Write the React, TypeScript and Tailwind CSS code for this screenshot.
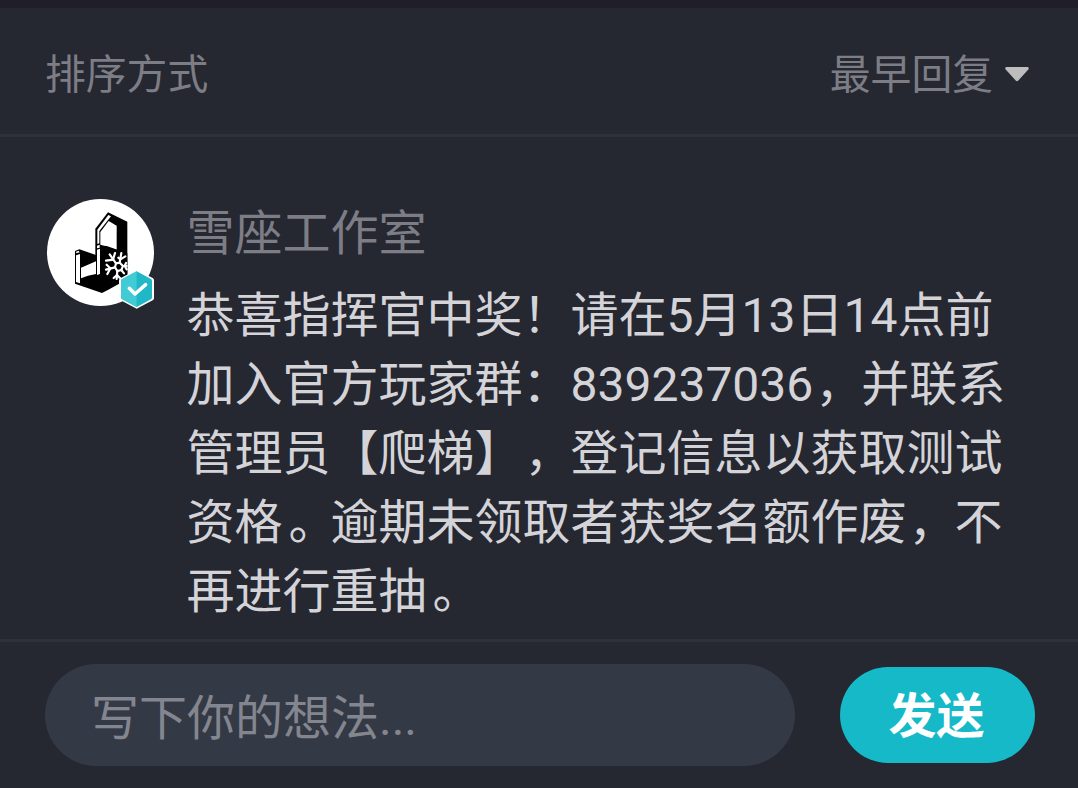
const commentLines = [
  "恭喜指挥官中奖！请在5月13日14点前",
  "加入官方玩家群：839237036，并联系",
  "管理员【爬梯】，登记信息以获取测试",
  "资格。逾期未领取者获奖名额作废，不",
  "再进行重抽。",
];

// full stops and commas sit a little further into their cell than the font's default
const renderLine = (line: string) =>
  line.split(/([。，])/).map((part, index) => {
    if (part === "。") {
      return (
        <span key={index} className="mr-[-6px] ml-[6px]">
          {part}
        </span>
      );
    }
    if (part === "，") {
      return (
        <span key={index} className="mr-[-2px] ml-[2px]">
          {part}
        </span>
      );
    }
    return part;
  });

const Avatar = () => (
  <svg
    viewBox="21 27 321 321"
    className="size-[107px] shrink-0 overflow-visible"
    role="img"
  >
    <circle cx="181.5" cy="187.5" r="160.5" fill="#fff" />
    {/* throne back */}
    <path d="M166 116L204 67L262 95V268L232 282L166 262Z" fill="#000" />
    <path d="M172 119L205 75L213 79L178 123V160L172 162Z" fill="#fff" />
    <path d="M181 126L206 93L230 107V180L181 164Z" fill="#fff" />
    {/* seat and arm rests */}
    <path d="M105 183L118 178L170 196V166L200 168L262 190V268L205 299L186 309L105 281Z" fill="#000" />
    <path d="M108 196L120 192V280L108 276Z" fill="#fff" />
    <path d="M108 185L116 182L119 187L109 190Z" fill="#fff" />
    <path d="M123 233L168 214V252L144 257L123 265Z" fill="#fff" />
    <path d="M171 179L180 176V252L171 255Z" fill="#fff" />
    <path d="M171 167L179 164V173L171 175Z" fill="#fff" />
    {/* snowflake */}
    <g fill="none" stroke="#fff" strokeWidth="6.5" strokeLinecap="round">
      <path d="M228 220L239 218L249 228L244 240L232 243L225 232Z" />
      <path d="M228 220L209 193M239 218L244 189M249 228H260M225 232L198 239M232 243L230 267M244 240L252 250" />
      <path d="M198 212L219 209L225 189M235 203L241 208L256 199M200 224L211 235L202 252M221 264L231 255L240 264M258 219L254 228L260 238" />
    </g>
    {/* verified badge */}
    <path d="M290 239L338 264Q342 266 342 271V325Q342 329 338 331L290 356L242 331Q237 328 237 323V272Q237 267 241 265Z" fill="#fff" />
    <path d="M290 244L333 267Q336 269 336 273V322Q336 326 333 328L290 351L247 328Q243 326 243 322V273Q243 269 247 267Z" fill="#20b7c7" />
    <path d="M290 244L247 267Q243 269 243 273V322Q243 326 247 328L290 351Z" fill="#40cbd5" />
    <path d="M268 295L285 312L317 284" fill="none" stroke="#fff" strokeWidth="10.5" strokeLinecap="round" strokeLinejoin="round" />
  </svg>
);

const App = () => {
  return (
    <div className="flex h-[788px] w-[1078px] flex-col overflow-hidden border-t-8 border-[#1f1e29] bg-[#252731] font-[Roboto,'Noto_Sans_CJK_SC',sans-serif] [text-spacing-trim:space-all]">
      <header className="flex h-[129px] shrink-0 items-center justify-between border-b-3 border-[#2e303b] pt-[7px] pr-[49px] pl-[45px] text-[40.8px] text-[#7d7d86]">
        <span className="pt-[2px]">排序方式</span>
        <div className="flex items-center gap-[12px]">
          <span className="pt-[2px]">最早回复</span>
          <svg viewBox="0 0 24 15" className="h-[15px] w-6">
            <path d="M1.2 0H22.8Q24.5 1 23.3 2.4L13.3 13.6Q12 15 10.7 13.6L0.7 2.4Q-0.5 1 1.2 0Z" fill="#bdbdbd" />
          </svg>
        </div>
      </header>

      <main className="flex h-[505px] shrink-0 gap-[32.5px] border-b-3 border-[#2e303b] pt-[62px] pl-[47px]">
        <Avatar />
        <div className="text-5xl">
          <h2 className="h-[82px] leading-[69px] text-[#7d7d86]">雪座工作室</h2>
          <p className="leading-[69px] whitespace-nowrap text-[#d4d4d8]">
            {commentLines.map((line) => (
              <span key={line} className="block">
                {renderLine(line)}
              </span>
            ))}
          </p>
        </div>
      </main>

      <footer className="flex items-start gap-[45px] pt-[22px] pl-[45px]">
        <input
          placeholder="写下你的想法..."
          className="h-[102px] w-[750px] rounded-full bg-[#343946] pt-[6px] pl-[46px] text-5xl outline-none placeholder:text-[#84868f]"
        />
        <button className="mt-[3px] h-[96px] w-[195px] rounded-full bg-[#15b9c8] pt-[3px] pr-[2px] text-5xl font-bold text-white">
          发送
        </button>
      </footer>
    </div>
  );
};

export default App;
